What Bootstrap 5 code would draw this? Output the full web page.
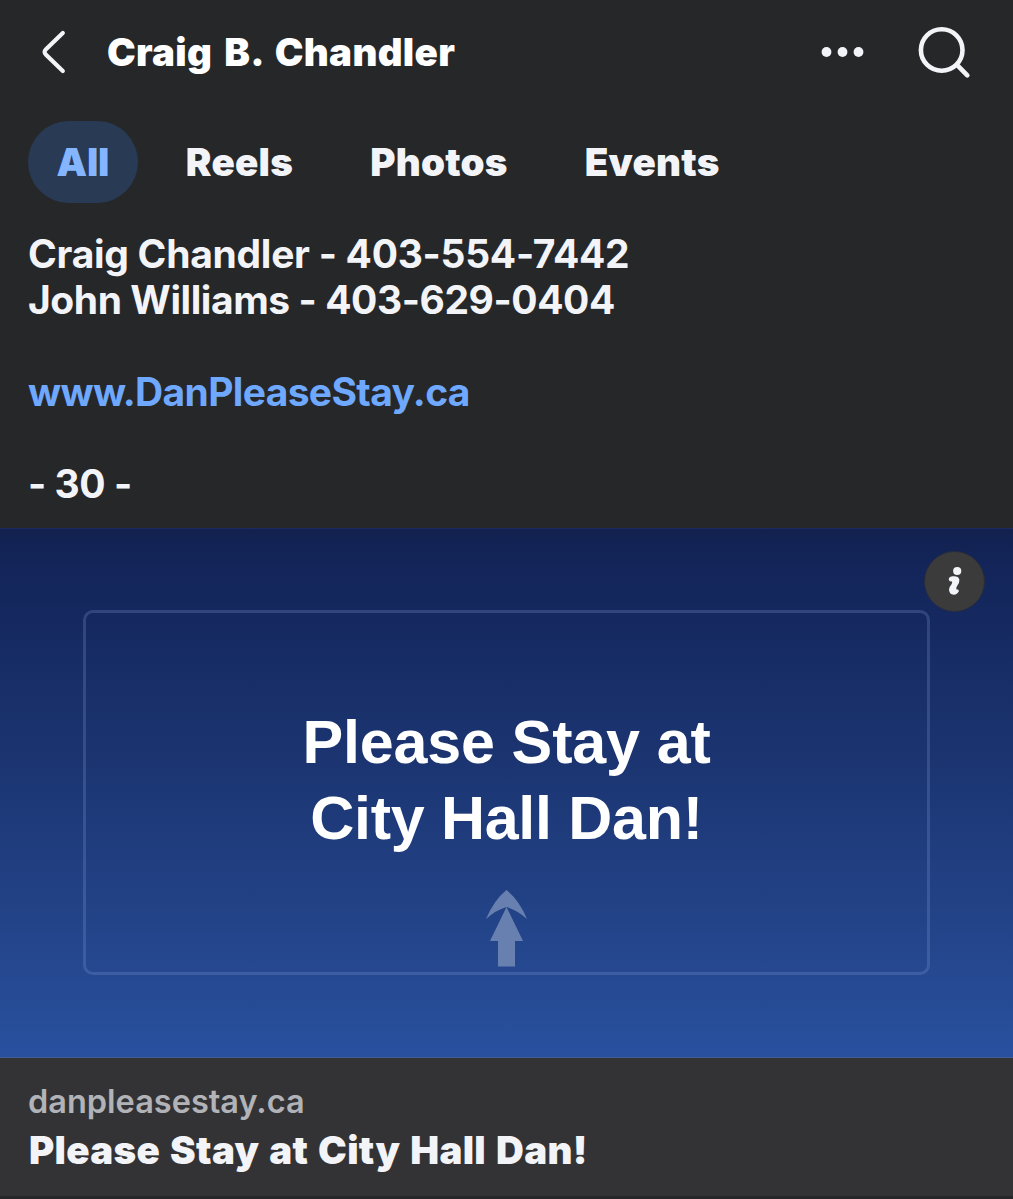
<!DOCTYPE html>
<html lang="en" data-bs-theme="dark">
<head>
<meta charset="utf-8">
<meta name="viewport" content="width=device-width, initial-scale=1">
<title>Craig B. Chandler</title>
<link href="https://cdn.jsdelivr.net/npm/bootstrap@5.3.0/dist/css/bootstrap.min.css" rel="stylesheet">
<style>
  body { background: #262729; color: #f3f4f8; font-family: Inter, "Liberation Sans", sans-serif; width: 1013px; height: 1199px; overflow: hidden; }
  .topbar { height: 104px; padding: 0 40px 0 41px; }
  .profile-name { font-size: 38.5px; font-weight: 900; line-height: 48px; margin: 0 0 0 40px; letter-spacing: .3px; word-spacing: 4px; }
  .filter-tabs { height: 100px; padding: 17px 28px 0; gap: 19px; }
  .filter-tabs .nav-link { height: 82px; line-height: 82px; padding: 0 29px; border-radius: 41px; font-size: 38.5px; font-weight: 900; color: #f3f4f8; letter-spacing: .25px; }
  .filter-tabs .nav-link.active { background: #293a54; color: #85b5ff; padding: 0 28.5px; letter-spacing: -.2px; }
  .post-body { height: 324px; padding: 27px 28px 0; font-size: 39px; line-height: 46px; font-weight: 700; letter-spacing: -.43px; }
  .post-body p { margin: 0 0 46px; }
  .post-body a { color: #6ea8ff; letter-spacing: -.65px; }
  .first-contact { letter-spacing: -.28px; }
  .preview-art { height: 530px; background: linear-gradient(#12214f 0, #13255a 8%, #1b3470 42%, #234388 74%, #284f9b 96%, #2950a0 100%); border-top: 1px solid #1b2b60; border-bottom: 1px solid #425f98; }
  .art-frame { width: 847px; height: 365px; margin: 81px 0 0 83px; border: 3px solid rgba(140,165,220,.24); border-radius: 10px; padding-top: 91px; }
  .art-heading { font: 700 61px/76px "Liberation Sans", Arial, sans-serif; color: #fff; margin: 0; letter-spacing: -.15px; }
  .heading-second { letter-spacing: -.3px; }
  .arrow-mark { margin-top: 34px; }
  .info-badge { top: 22px; right: 28px; width: 61px; height: 61px; background: #3b3b3c; border: 1px solid #292d3b; }
  .link-caption { height: 138px; padding: 22px 28px 0; background: #333335; }
  .link-domain { font-size: 32.5px; line-height: 43px; font-weight: 600; color: #b1b3b8; }
  .link-title { font-size: 38.5px; line-height: 55px; font-weight: 900; margin: 0 0 0 1px; letter-spacing: .3px; word-spacing: 2px; color: #f3f4f8; }
</style>
</head>
<body>
<header class="topbar d-flex align-items-center">
  <svg width="26" height="44" viewBox="0 0 26 44" fill="none" stroke="#f3f4f8" stroke-width="4.2" stroke-linecap="round" stroke-linejoin="round"><path d="M21.8 3 5 19.2Q2.2 22 5 24.8L21.8 41"/></svg>
  <h1 class="profile-name text-nowrap">Craig B. Chandler</h1>
  <div class="d-flex align-items-center ms-auto">
    <svg width="44" height="12" viewBox="0 0 44 12" fill="#f3f4f8"><circle cx="5.5" cy="6" r="4.9"/><circle cx="21.5" cy="6" r="4.9"/><circle cx="37.5" cy="6" r="4.9"/></svg>
    <svg class="ms-5" width="60" height="60" viewBox="0 0 60 60" fill="none" stroke="#f3f4f8" stroke-width="4.6" stroke-linecap="round"><circle cx="28.7" cy="28" r="20.8"/><path d="M44 42.8 54.3 53.3"/></svg>
  </div>
</header>
<nav class="nav filter-tabs flex-nowrap align-items-start">
  <a class="nav-link active" href="#">All</a>
  <a class="nav-link" href="#">Reels</a>
  <a class="nav-link" href="#">Photos</a>
  <a class="nav-link" href="#">Events</a>
</nav>
<main>
  <div class="post-body">
    <p><span class="first-contact">Craig Chandler - 403-554-7442</span><br>John Williams - 403-629-0404</p>
    <p><a class="text-decoration-none" href="#">www.DanPleaseStay.ca</a></p>
    <p>- 30 -</p>
  </div>
  <div class="preview-art position-relative overflow-hidden">
    <div class="art-frame d-flex flex-column align-items-center">
      <h2 class="art-heading text-center">Please Stay at<br><span class="heading-second">City Hall Dan!</span></h2>
      <svg class="arrow-mark flex-shrink-0" width="42" height="78" viewBox="0 0 42 78" fill="#6880b0"><path d="M20.5 0Q33 10 41 29Q31 20 20.5 17Q10 20 0 29Q8 10 20.5 0Z"/><path d="M20.5 17 37 51H29V76.5H12V51H4Z"/></svg>
    </div>
    <button class="btn info-badge position-absolute rounded-circle p-0 d-flex align-items-center justify-content-center" type="button" aria-label="Information">
      <svg width="18" height="32" viewBox="0 1 16 29" fill="#f3f4f8"><circle cx="10" cy="5.5" r="3.7"/><path d="M2.4 13.8Q2 10.8 5.5 10.4Q11.2 9.8 12 13.4Q12.2 16 10 18.8Q8.6 20.8 9.4 22.4Q11.8 21.6 11.4 24.2Q10 27 7 27Q2.4 26.6 2.6 22Q3 19.6 5 17.2Q5.8 15.9 5.2 14.9Q3.2 15.6 2.4 13.8Z"/></svg>
    </button>
  </div>
  <section class="link-caption">
    <div class="link-domain">danpleasestay.ca</div>
    <h3 class="link-title">Please Stay at City Hall Dan!</h3>
  </section>
</main>
<script src="https://cdn.jsdelivr.net/npm/bootstrap@5.3.0/dist/js/bootstrap.bundle.min.js"></script>
</body>
</html>
